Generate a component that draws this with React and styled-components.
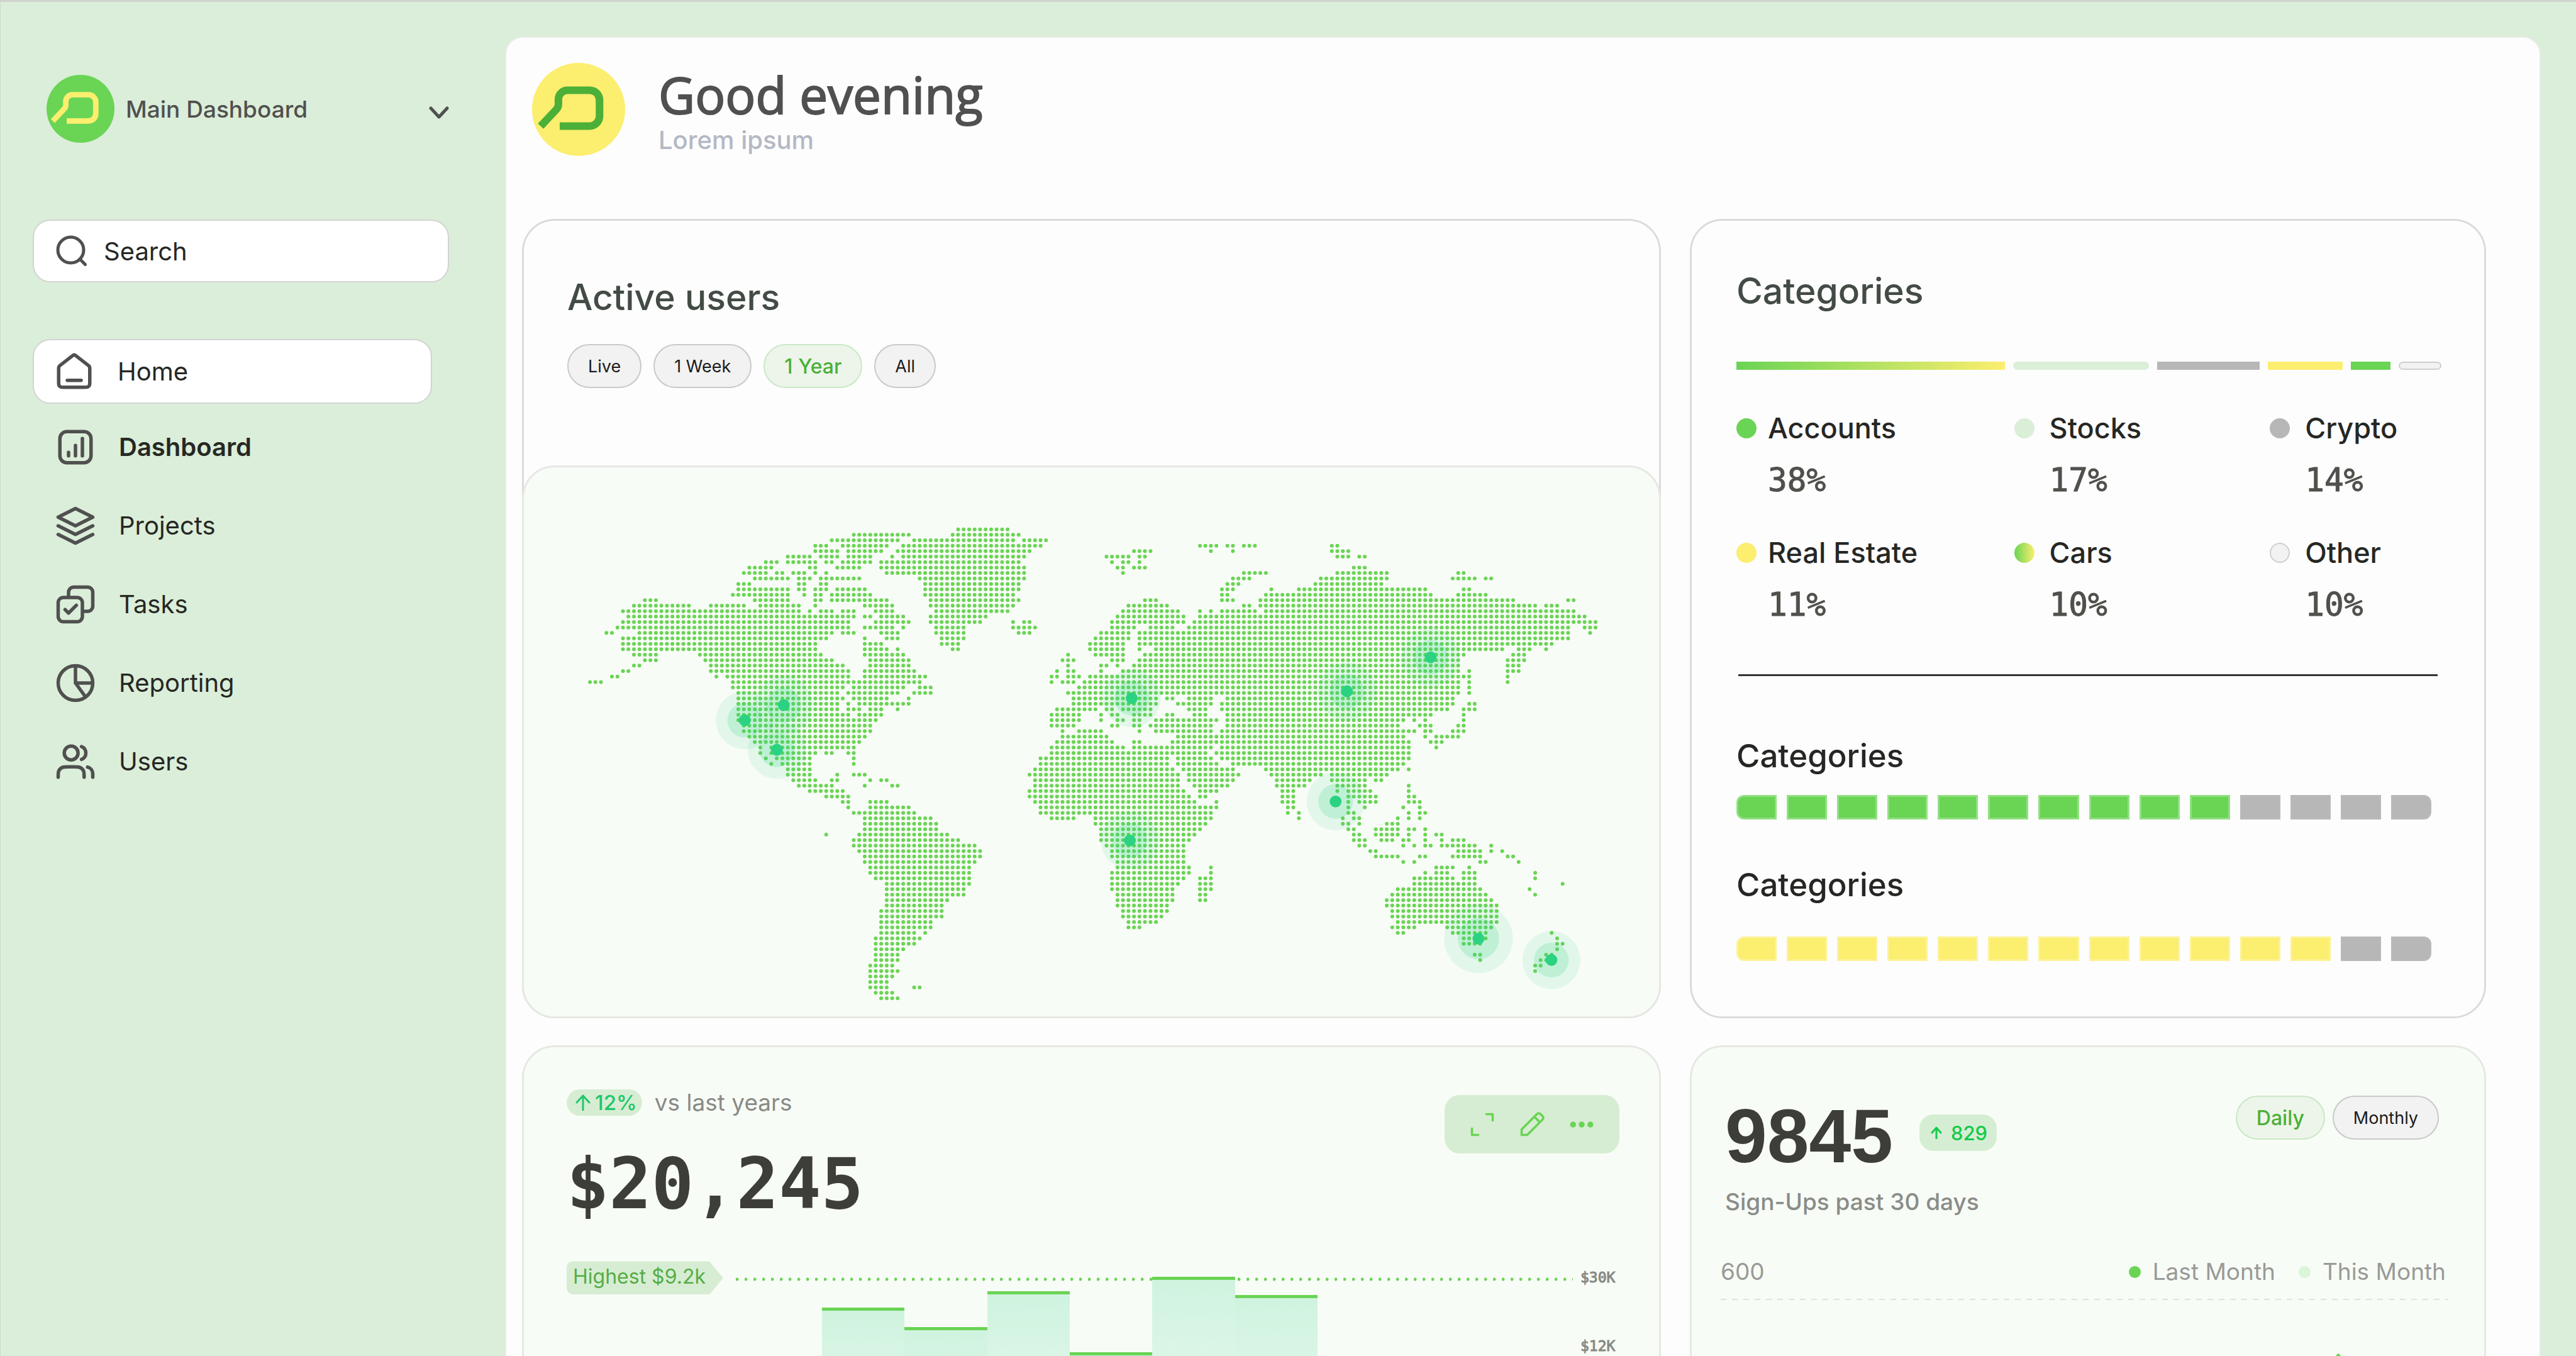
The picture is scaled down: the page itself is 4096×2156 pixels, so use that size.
import React from 'react'
import styled, { createGlobalStyle } from 'styled-components'

const GlobalStyle = createGlobalStyle`
* {
  box-sizing: border-box;
}
body {
  margin: 0;
  background: #dbeed9;
  font-family: Inter, "Liberation Sans", sans-serif;
  color: #262724;
}
h1, h2, h3, p, ul, dl, dd {
  margin: 0;
  padding: 0;
  font-weight: 500;
}
button, input {
  font: inherit;
  color: inherit;
  border: 0;
  padding: 0;
  background: none;
}
`

const mono = '"DejaVu Sans Mono", "Liberation Mono", monospace'

const Page = styled.div`
display: flex;
height: 100vh;
overflow: hidden;
border-top: 3px solid #d0d3ce;
border-left: 1px solid #cfd8cd;
`

/* ---------- sidebar ---------- */

const Sidebar = styled.aside`
flex: 0 0 802px;
min-width: 0;
padding: 116px 89px 0 51px;
`
const Switcher = styled.button`
display: flex;
align-items: center;
width: 100%;
padding-left: 22px;
font-size: 37px;
font-weight: 500;
color: #505050;
text-align: left;
cursor: pointer;
svg:last-child {
  margin-top: 12px;
}
`
const SwitcherName = styled.span`
flex: 1;
margin-left: 18px;
`
const SearchBox = styled.label`
display: flex;
align-items: center;
gap: 26px;
height: 100px;
margin-top: 122px;
padding: 0 35px;
background: #ffffff;
border: 2px solid #d3d3d3;
border-radius: 28px;
color: #505050;
`
const SearchInput = styled.input`
flex: 1;
width: 100%;
min-width: 0;
font-size: 40px;
color: #262724;
outline: none;
&::placeholder {
  color: #262724;
  opacity: 1;
}
`
const Nav = styled.nav`
display: flex;
flex-direction: column;
margin-top: 90px;
`
const NavLink = styled.a`
display: flex;
align-items: center;
gap: 36px;
height: ${props => (props.$boxed ? '103px' : '125px')};
margin: ${props => (props.$boxed ? '0 27px 6px 0' : '0')};
padding-left: ${props => (props.$boxed ? '31px' : '33px')};
background: ${props => (props.$boxed ? '#ffffff' : 'transparent')};
border: 2px solid ${props => (props.$boxed ? '#d3d3d3' : 'transparent')};
border-radius: 28px;
font-size: 40px;
font-weight: ${props => (props.$bold ? 600 : 400)};
color: #262724;
text-decoration: none;
svg {
  color: #505050;
}
`

/* ---------- main panel ---------- */

const Main = styled.main`
flex: 1;
min-width: 0;
margin: 55px 56px 0 0;
padding: 40px 85px 0 25px;
background: #fdfdfd;
border: 2px solid #e9ebe8;
border-bottom: 0;
border-radius: 28px 28px 0 0;
`
const Header = styled.header`
display: flex;
align-items: center;
gap: 53px;
padding-left: 16px;
`
const Greeting = styled.h1`
font-family: "Open Sans", "Noto Sans", sans-serif;
font-size: 80px;
font-weight: 400;
line-height: 98px;
color: #505050;
-webkit-text-stroke: 2px currentColor;
`
const Subtitle = styled.p`
font-size: 40px;
line-height: 48px;
color: #b3b8c4;
`
const Board = styled.div`
display: grid;
grid-template-columns: 1811fr 1266fr;
gap: 43px 46px;
margin-top: 100px;
`
const Card = styled.section`
min-width: 0;
border: 3px solid ${props => (props.$tinted ? '#e6e8e3' : '#dadbda')};
border-radius: 52px;
background: ${props => (props.$tinted ? '#f8fcf6' : '#fdfdfd')};
`
const UsersHead = styled.div`
padding: 86px 69px 123px;
`
const CardTitle = styled.h2`
font-size: 57px;
line-height: 72px;
color: #434b45;
`
const Pills = styled.div`
display: flex;
gap: ${props => props.$gap || 19}px;
margin-top: ${props => props.$top || 0}px;
`
const Pill = styled.button`
height: 70px;
padding: 0 31px;
border: 2px solid ${props => (props.$active ? '#c9e8c5' : '#c8cac8')};
border-radius: 35px;
background: ${props => (props.$active ? '#edf5ea' : '#f1f2f1')};
font-size: ${props => (props.$active ? 32 : 27)}px;
font-weight: ${props => (props.$active ? 500 : 400)};
color: ${props => (props.$active ? '#4caf38' : '#1b1b1b')};
cursor: pointer;
`
const MapPanel = styled.div`
margin: 0 -3px -3px;
background: #f8fcf6;
border: 3px solid #e6e8e3;
border-radius: 52px;
svg {
  display: block;
  width: 100%;
  height: auto;
}
`

/* ---------- categories ---------- */

const fills = {
  green: '#6ad455',
  mint: '#daeed8',
  gray: '#b7b7b7',
  yellow: '#fcee6e',
  blend: 'linear-gradient(90deg, #6ad455, #fcee6e)',
  empty: '#f2f2f2',
}

const CategoriesCard = styled(Card)`
padding: 76px 68px 0 71px;
`
const SplitBar = styled.div`
display: flex;
gap: 13px;
margin-top: 76px;
`
const SplitPart = styled.div`
flex: ${props => props.$share} 1 0;
height: 13px;
background: ${props => fills[props.$fill]};
border: ${props => (props.$fill === 'empty' ? '2px solid #cfcfcf' : '0')};
border-radius: ${props => (props.$round ? '7px' : '0')};
`
const CategoryGrid = styled.dl`
display: grid;
grid-template-columns: 442fr 407fr 273fr;
row-gap: 55px;
margin-top: 65px;
`
const Category = styled.div`
display: grid;
grid-template-columns: 32px 1fr;
column-gap: 24px;
row-gap: 23px;
align-items: center;
&:nth-child(3n + 1) {
  column-gap: 18px;
}
`
const CategoryDot = styled.span`
width: 32px;
height: 32px;
border-radius: 50%;
background: ${props => fills[props.$fill]};
border: ${props => (props.$fill === 'empty' ? '2px solid #cfcfcf' : '0')};
`
const CategoryName = styled.dt`
font-size: 45px;
font-weight: 500;
line-height: 56px;
`
const CategoryValue = styled.dd`
grid-column: 2;
font-family: ${mono};
font-size: 51px;
font-weight: 400;
line-height: 64px;
color: #50504c;
-webkit-text-stroke: 1px currentColor;
`
const Divider = styled.hr`
height: 3px;
margin: 78px 6px 97px 3px;
border: 0;
background: #333333;
`
const MeterTitle = styled.h3`
font-size: 51px;
line-height: 60px;
`
const Meter = styled.div`
display: flex;
gap: 16px;
margin: ${props => props.$top}px 16px 74px 0;
`
const MeterStep = styled.span`
flex: 1;
height: 39px;
border: 3px solid ${props => ({ green: '#93e083', yellow: '#fcf297', gray: '#b9b9b9' })[props.$fill]};
background: ${props => fills[props.$fill]};
&:first-child {
  border-radius: 12px 0 0 12px;
}
&:last-child {
  border-radius: 0 12px 12px 0;
}
`

/* ---------- revenue ---------- */

const RevenueCard = styled(Card)`
padding: 67px 63px 0 68px;
`
const CardTop = styled.div`
display: flex;
justify-content: space-between;
align-items: flex-start;
`
const Change = styled.div`
display: flex;
align-items: center;
gap: 20px;
`
const ChangeBadge = styled.span`
display: flex;
align-items: center;
gap: 7px;
height: 42px;
padding: 0 8px 0 14px;
border-radius: 21px;
background: #d7edd3;
font-size: 33px;
font-weight: 500;
color: #1fc76a;
`
const ChangeNote = styled.span`
font-size: 37px;
line-height: 42px;
color: #888a87;
`
const BigNumber = styled.p`
margin-top: ${props => props.$top || 0}px;
font-family: ${mono};
font-size: 112px;
font-weight: 700;
line-height: 128px;
color: #3d3d3a;
`
const SignupsNumber = styled(BigNumber)`
font-family: "Liberation Sans", Inter, sans-serif;
font-size: 120px;
`
const Tools = styled.div`
display: flex;
align-items: center;
gap: 35px;
height: 93px;
margin-top: 9px;
padding: 0 38px;
border-radius: 24px;
background: #d7edd3;
color: #6ad455;
`
const ToolButton = styled.button`
display: flex;
cursor: pointer;
`
const Chart = styled.div`
display: flex;
align-items: flex-start;
margin-top: 59px;
`
const PeakTag = styled.span`
height: 53px;
padding: 0 28px 0 10px;
border-radius: 10px 0 0 10px;
background: #d7edd3;
clip-path: polygon(0 0, calc(100% - 22px) 0, 100% 50%, calc(100% - 22px) 100%, 0 100%);
font-size: 32px;
line-height: 50px;
color: #56ad45;
`
const Plot = styled.div`
display: flex;
align-items: flex-end;
flex: 1;
height: 400px;
margin: 25px 12px 0 20px;
padding-left: 137px;
background: radial-gradient(circle at 2px 4px, #6ad455 2px, transparent 3px) 0 0 / 14px 8px repeat-x;
`
const Bar = styled.div`
flex: 0 0 11%;
border-top: 5px solid #6ad455;
background: linear-gradient(#cff3df, #f8fcf6);
`
const Axis = styled.div`
display: flex;
flex-direction: column;
gap: 85px;
width: 62px;
margin-top: 14px;
font-family: ${mono};
font-size: 23px;
line-height: 24px;
color: #868a83;
-webkit-text-stroke: 1px currentColor;
`

/* ---------- sign-ups ---------- */

const SignupsCard = styled(Card)`
padding: 77px 58px 0 46px;
`
const SignupsTop = styled(CardTop)`
padding: 0 14px 0 7px;
`
const SignupsCount = styled.div`
display: flex;
align-items: flex-start;
gap: 42px;
`
const CountBadge = styled.span`
display: flex;
align-items: center;
gap: 14px;
height: 58px;
margin-top: 30px;
padding: 0 15px 0 18px;
border-radius: 22px;
background: #d5eed3;
font-size: 31px;
font-weight: 500;
color: #16c94c;
`
const SignupsNote = styled.p`
margin-top: 17px;
padding-left: 7px;
font-size: 37px;
line-height: 48px;
color: #8a8c89;
`
const TrendHead = styled.div`
display: flex;
align-items: center;
margin-top: 65px;
padding-right: 3px;
font-size: 37px;
line-height: 44px;
color: #989a97;
`
const TrendMax = styled.span`
flex: 1;
`
const TrendKey = styled.span`
display: flex;
align-items: center;
gap: 19px;
margin-left: 37px;
&::before {
  content: "";
  width: 19px;
  height: 19px;
  border-radius: 50%;
  background: ${props => props.$color};
}
`
const TrendLine = styled.div`
height: 2px;
margin-top: 21px;
background: repeating-linear-gradient(90deg, #dfe3dc 0 9px, transparent 9px 18px);
`
const TrendSvg = styled.svg`
display: block;
width: 100%;
`

/* ---------- icons ---------- */

const Icon = ({ d, size = 66, width = 2, children }) => (
  <svg
    width={size}
    height={size}
    viewBox="0 0 24 24"
    fill="none"
    stroke="currentColor"
    strokeWidth={width}
    strokeLinecap="round"
    strokeLinejoin="round"
    aria-hidden="true"
  >
    {d && <path d={d} />}
    {children}
  </svg>
)

const Logo = ({ size, back, line }) => (
  <svg width={size} height={size} viewBox="0 0 108 108" aria-hidden="true">
    <circle cx="54" cy="54" r="54" fill={back} />
    <path
      d="M32.1 73.3H66.8a11.5 11.5 0 0 0 11.5-11.5V43.2a11.5 11.5 0 0 0-11.5-11.5H41.1a10.5 10.5 0 0 0-10.5 10.5V48q0 3.4-2.4 6L10 73.5"
      fill="none"
      stroke={line}
      strokeWidth="8.8"
    />
  </svg>
)

const ArrowUp = ({ width, height, stroke }) => (
  <svg width={width} height={height} viewBox={`0 0 ${width} ${height}`} fill="none" aria-hidden="true">
    <path
      d={`M${width / 2} ${height - 1}V2M2 ${width / 2 + 1}L${width / 2} 2L${width - 2} ${width / 2 + 1}`}
      stroke="currentColor"
      strokeWidth={stroke}
      strokeLinecap="round"
      strokeLinejoin="round"
    />
  </svg>
)

const icons = {
  home: 'M8 17H16M11.0177 2.76401L4.23539 8.03914C3.78202 8.39176 3.55534 8.56807 3.39203 8.78887C3.24737 8.98446 3.1396 9.2048 3.07403 9.43907C3 9.70355 3 9.99073 3 10.5651V17.8C3 18.9201 3 19.4801 3.21799 19.908C3.40973 20.2843 3.71569 20.5903 4.09202 20.782C4.51984 21 5.07989 21 6.2 21H17.8C18.9201 21 19.4802 21 19.908 20.782C20.2843 20.5903 20.5903 20.2843 20.782 19.908C21 19.4801 21 18.9201 21 17.8V10.5651C21 9.99073 21 9.70355 20.926 9.43907C20.8604 9.2048 20.7526 8.98446 20.608 8.78887C20.4447 8.56807 20.218 8.39176 19.7646 8.03913L12.9823 2.76401C12.631 2.49076 12.4553 2.35413 12.2613 2.30162C12.0902 2.25528 11.9098 2.25528 11.7387 2.30162C11.5447 2.35413 11.369 2.49076 11.0177 2.76401Z',
  dashboard: 'M8 15V17M12 11V17M16 7V17M7 3H17A4 4 0 0 1 21 7V17A4 4 0 0 1 17 21H7A4 4 0 0 1 3 17V7A4 4 0 0 1 7 3Z',
  projects: 'M2 12L12 17L22 12M2 17L12 22L22 17M12 2L2 7L12 12L22 7L12 2Z',
  tasks: 'M6 15L8 17L12.5 12.5M8 8V5A3 3 0 0 1 11 2H19A3 3 0 0 1 22 5V13A3 3 0 0 1 19 16H16M5 22H13A3 3 0 0 0 16 19V11A3 3 0 0 0 13 8H5A3 3 0 0 0 2 11V19A3 3 0 0 0 5 22Z',
  reporting: 'M12 2V12M22 12H12M12 12L17.878 20.09M12 2A10 10 0 0 1 12 22A10 10 0 0 1 12 2Z',
  users: 'M22 21V19C22 17.1362 20.7252 15.5701 19 15.126M15.5 3.29076C16.9659 3.88415 18 5.32131 18 7C18 8.67869 16.9659 10.1159 15.5 10.7092M17 21C17 19.1362 17 18.2044 16.6955 17.4693C16.2895 16.4892 15.5108 15.7105 14.5307 15.3045C13.7956 15 12.8638 15 11 15H8C6.13623 15 5.20435 15 4.46927 15.3045C3.48915 15.7105 2.71046 16.4892 2.30448 17.4693C2 18.2044 2 19.1362 2 21M13.5 7C13.5 9.20914 11.7091 11 9.5 11C7.29086 11 5.5 9.20914 5.5 7C5.5 4.79086 7.29086 3 9.5 3C11.7091 3 13.5 4.79086 13.5 7Z',
}

/* ---------- data ---------- */

const navItems = [
  { label: 'Home', icon: 'home', boxed: true },
  { label: 'Dashboard', icon: 'dashboard', bold: true },
  { label: 'Projects', icon: 'projects' },
  { label: 'Tasks', icon: 'tasks' },
  { label: 'Reporting', icon: 'reporting' },
  { label: 'Users', icon: 'users' },
]

const splits = [
  { share: 429, fill: 'blend' },
  { share: 218, fill: 'mint', round: true },
  { share: 164, fill: 'gray' },
  { share: 119, fill: 'yellow' },
  { share: 64, fill: 'green' },
  { share: 64, fill: 'empty', round: true },
]

const categories = [
  { name: 'Accounts', value: '38%', fill: 'green' },
  { name: 'Stocks', value: '17%', fill: 'mint' },
  { name: 'Crypto', value: '14%', fill: 'gray' },
  { name: 'Real Estate', value: '11%', fill: 'yellow' },
  { name: 'Cars', value: '10%', fill: 'blend' },
  { name: 'Other', value: '10%', fill: 'empty' },
]

const bars = [351, 320, 377, 280, 400, 371]

// one string per row of dots, each entry is a column or a range of columns
const landRows = [
  '67-76',
  '48-58 66-78',
  '44-56 59-77 79-83',
  '41-43 46-54 57-82 111-114 116-117 119-121 135-136',
  '41-45 47-53 56-80 99-102 113 117 135-138',
  '36-40 42-45 47-51 55 57-79 94-98 100-101 136-138 140-141',
  '32-34 36-41 43-44 46-51 53-78 95 97-98 100',
  '29-33 40-41 45-49 53-79 96-97 99-101 139-141',
  '28-32 34-35 37-39 41 43 54-79 97 119-123 136-145 158-159',
  '30-36 38-40 42-49 60-79 117-120 133-145 157-161 163-164',
  '27-29 38-39 42-43 61-78 116-118 132-144',
  '27-36 38-39 41-43 45-50 61-78 115-117 124 129-152 159-160',
  '26-36 39 41-42 44-51 61-77 115-116 123-153 158-163',
  '10-12 30-36 41-42 44-54 62-78 101-103 115-117 122-168 178-179',
  '8-18 22-28 31-38 41 50-55 62-77 98-105 119-120 122-172 174-176',
  '6-38 40 42-44 46-48 52-55 63-76 97-107 111 113 115-121 123-179',
  '7-48 50-51 53-57 62-72 96-108 111-181',
  '6-47 52-58 62-71 77 79-80 95-108 110-183',
  '5-47 50-55 57 63-68 77-81 95-99 102-106 109-178 181-183',
  '3-4 9-44 46-48 53-56 63-68 78-80 93-98 100-178 182',
  '6-43 50 54-56 64-68 92-98 100-178',
  '6-41 50-53 64-67 91-97 100-175',
  '6-41 50-54 56 66-67 91-97 100 103-166 169-171 174',
  '8-12 20-42 50-57 87 92-97 101-159 168-170',
  '10-12 21-44 51-58 86-88 95-97 100-158 167-170',
  '8-9 22-46 51-58 87 93-94 96 99-158 167-169',
  '6-7 22-47 50-59 85 87-88 93 97-158 160 167-169',
  '4-5 23 25-47 50-61 84-85 87-89 91-160 167',
  '0-2 26-60 84 86-88 90-158 160 167',
  '26-46 48-57 60-62 89-158 160',
  '27-45 47-56 59-62 87-158 160',
  '27-46 48-54 58 88-103 105-106 109-113 116-157',
  '27-45 47 49-58 88-103 107-113 115-157 160-161',
  '27-45 47-49 51-53 56 85-92 94-95 97-102 109-112 115-156 159-161',
  '27-47 49-53 84-89 93 95-96 99-102 105-106 110-112 116-153 159',
  '27-52 84-89 93 96-97 99-100 103-114 116-148 150 152 159',
  '28-51 84-88 95-96 99-100 102-113 116-147 151-153 158-159',
  '28-51 86 89-93 100 103-113 115-150 152-153 157-159',
  '29-50 86-94 107-148 152 154-158',
  '30-49 85-95 99-100 106-149 153-155',
  '31 33-48 84-97 99-113 115-149 154',
  '31 33-41 43-44 47-48 84-112 114-149',
  '32 34-40 48 82-105 107-113 115-149',
  '33 35-40 48 82-105 107-114 117-148',
  '36-40 81-106 108-117 123-147 149',
  '36-40 45 48-50 80-107 109-118 124-133 135-145',
  '37-41 44-45 51 53-54 81-107 109-117 125-131 135-141 143-144',
  '38-44 50 55-56 81-107 110-116 125-130 136-141 149',
  '40-46 80-108 111-114 126-128 136 138-142 149',
  '43-47 80-109 111-112 126-128 138-143 149-150',
  '46-47 51-54 81-110 114 126-128 138 140-143 149-151',
  '47 51-58 82-114 127-128 138 141 148 151',
  '48-59 82-113 127 129 138-139 149 151-152',
  '50-62 84-88 92-113 129 137 139-140 147 149 151',
  '50-63 92-112 137-138 140 145-147',
  '50-63 93-111 138-139 143-147 149-150 152',
  '43 49-65 93-110 139-140 143-147 149 152 154-155',
  '48-67 93-109 139-141 144-146 148-149 152 155 157-159',
  '48-70 94-108 140-141 148 150 152-153 155-161 164',
  '49-71 95-108 142-143 158-162 164 166',
  '50-71 95-108 143-147 151-152 157-162 167-168',
  '50-70 96-108 148 150 162-163 169',
  '51-69 96-109 113 154-157 160',
  '51-69 95-109 113 152 154-156 159-161 172',
  '52-69 95-108 111-113 150-157 159-161 172',
  '54-69 95-107 111-113 150-161 177',
  '54-68 95-106 111-113 147-162 171',
  '54-68 96-106 111-112 146-163 172',
  '54-65 96-106 111-112 145-164',
  '54-64 96-105 145-165',
  '53-64 97-105 146-165',
  '53-64 97-104 146-165',
  '53-62 98-103 147-165',
  '53-62 98-100 146-150 156-164',
  '53-59 61 147-148 157-163 175',
  '52-60 159-163 176',
  '52-59 159-162 176-177',
  '52-57 176',
  '52-56 161-162 174-175',
  '52-56 162 173-174',
  '51-55 172-173',
  '51-56 172',
  '51-55',
  '51-54',
  '51-54 59-60',
  '52-55',
  '53-56',
]

const landPath = landRows
  .map((row, r) =>
    row
      .split(' ')
      .map(range => {
        const [from, to = from] = range.split('-').map(Number)
        let out = ''
        for (let c = from; c <= to; c++) {
          out += `M${(105 + c * 8.733).toFixed(1)} ${(98.6 + r * 8.665).toFixed(1)}h0`
        }
        return out
      })
      .join('')
  )
  .join('')

const hotspots = [
  [351, 402],
  [413, 378],
  [402, 449],
  [966, 367],
  [1308, 356],
  [1441, 302],
  [1290, 531],
  [963, 593],
  [1517, 749, 1.19],
  [1633, 783],
]

const WorldMap = () => (
  <svg viewBox="0 0 1804 873" role="img" aria-label="Active users by location">
    <path d={landPath} stroke="#6ad455" strokeWidth="6" strokeLinecap="round" />
    {hotspots.map(([x, y, scale = 1]) => (
      <g key={`${x}-${y}`} fill="#2bd282">
        <circle cx={x} cy={y} r={46 * scale} opacity="0.1" />
        <circle cx={x} cy={y} r={27.6 * scale} opacity="0.19" />
        <circle cx={x} cy={y} r="9.4" />
      </g>
    ))}
  </svg>
)

const StepMeter = ({ title, fill, value, top }) => (
  <>
    <MeterTitle>{title}</MeterTitle>
    <Meter $top={top}>
      {Array.from({ length: 14 }, (_, i) => (
        <MeterStep key={i} $fill={i < value ? fill : 'gray'} />
      ))}
    </Meter>
  </>
)

class App extends React.Component {

  render() {
    return (
      <Page>
        <GlobalStyle />
        <Sidebar>
          <Switcher type="button">
            <Logo size={108} back="#6ad455" line="#fcee6e" />
            <SwitcherName>Main Dashboard</SwitcherName>
            <svg width="32" height="20" viewBox="0 0 32 20" fill="none" aria-hidden="true">
              <path d="M3 3L16 17L29 3" stroke="currentColor" strokeWidth="5" strokeLinecap="round" strokeLinejoin="round" />
            </svg>
          </Switcher>
          <SearchBox>
            <svg width="50" height="50" viewBox="0 0 50 50" fill="none" aria-hidden="true">
              <path d="M38 38L46.5 46.5" stroke="currentColor" strokeWidth="5" strokeLinecap="round" />
              <circle cx="23.5" cy="23.5" r="20.5" stroke="currentColor" strokeWidth="5" />
            </svg>
            <SearchInput type="search" placeholder="Search" aria-label="Search" />
          </SearchBox>
          <Nav>
            {navItems.map(item => (
              <NavLink key={item.label} href="#" $boxed={item.boxed} $bold={item.bold}>
                <Icon d={icons[item.icon]} />
                {item.label}
              </NavLink>
            ))}
          </Nav>
        </Sidebar>

        <Main>
          <Header>
            <Logo size={148} back="#fcee6e" line="#4caf38" />
            <div>
              <Greeting>Good evening</Greeting>
              <Subtitle>Lorem ipsum</Subtitle>
            </div>
          </Header>

          <Board>
            <Card>
              <UsersHead>
                <CardTitle>Active users</CardTitle>
                <Pills $top={38}>
                  <Pill type="button">Live</Pill>
                  <Pill type="button">1 Week</Pill>
                  <Pill type="button" $active>1 Year</Pill>
                  <Pill type="button">All</Pill>
                </Pills>
              </UsersHead>
              <MapPanel>
                <WorldMap />
              </MapPanel>
            </Card>

            <CategoriesCard>
              <CardTitle>Categories</CardTitle>
              <SplitBar>
                {splits.map(part => (
                  <SplitPart key={part.fill} $share={part.share} $fill={part.fill} $round={part.round} />
                ))}
              </SplitBar>
              <CategoryGrid>
                {categories.map(item => (
                  <Category key={item.name}>
                    <CategoryDot $fill={item.fill} />
                    <CategoryName>{item.name}</CategoryName>
                    <CategoryValue>{item.value}</CategoryValue>
                  </Category>
                ))}
              </CategoryGrid>
              <Divider />
              <StepMeter title="Categories" fill="green" value={10} top={32} />
              <StepMeter title="Categories" fill="yellow" value={12} top={52} />
            </CategoriesCard>

            <RevenueCard $tinted>
              <CardTop>
                <div>
                  <Change>
                    <ChangeBadge>
                      <ArrowUp width={24} height={26} stroke={3} />
                      12%
                    </ChangeBadge>
                    <ChangeNote>vs last years</ChangeNote>
                  </Change>
                  <BigNumber $top={44}>$20,245</BigNumber>
                </div>
                <Tools>
                  <ToolButton type="button" aria-label="Expand">
                    <Icon size={44}>
                      <path d="M15.5 3H21V8.5M8.5 21H3V15.5" />
                    </Icon>
                  </ToolButton>
                  <ToolButton type="button" aria-label="Edit">
                    <Icon size={44}>
                      <path d="M3 21V16.2L16.4 2.8a2 2 0 0 1 2.8 0L21.2 4.8a2 2 0 0 1 0 2.8L7.8 21ZM14 5.2L18.8 10" />
                    </Icon>
                  </ToolButton>
                  <ToolButton type="button" aria-label="More">
                    <Icon size={44} width={0}>
                      <g fill="currentColor">
                        <circle cx="4.5" cy="12" r="2.6" />
                        <circle cx="12" cy="12" r="2.6" />
                        <circle cx="19.5" cy="12" r="2.6" />
                      </g>
                    </Icon>
                  </ToolButton>
                </Tools>
              </CardTop>
              <Chart>
                <PeakTag>Highest $9.2k</PeakTag>
                <Plot>
                  {bars.map(height => (
                    <Bar key={height} style={{ height }} />
                  ))}
                </Plot>
                <Axis>
                  <span>$30K</span>
                  <span>$12K</span>
                </Axis>
              </Chart>
            </RevenueCard>

            <SignupsCard $tinted>
              <SignupsTop>
                <SignupsCount>
                  <SignupsNumber>9845</SignupsNumber>
                  <CountBadge>
                    <ArrowUp width={18} height={20} stroke={3} />
                    829
                  </CountBadge>
                </SignupsCount>
                <Pills $gap={12}>
                  <Pill type="button" $active>Daily</Pill>
                  <Pill type="button">Monthly</Pill>
                </Pills>
              </SignupsTop>
              <SignupsNote>Sign-Ups past 30 days</SignupsNote>
              <TrendHead>
                <TrendMax>600</TrendMax>
                <TrendKey $color="#6ad455">Last Month</TrendKey>
                <TrendKey $color="#daf5d8">This Month</TrendKey>
              </TrendHead>
              <TrendLine />
              <TrendSvg viewBox="0 0 1157 200" fill="none" aria-hidden="true">
                <path d="M900 190L983 88L1066 190" stroke="#6ad455" strokeWidth="5" strokeLinejoin="round" />
              </TrendSvg>
            </SignupsCard>
          </Board>
        </Main>
      </Page>
    )
  }
}

export default App
